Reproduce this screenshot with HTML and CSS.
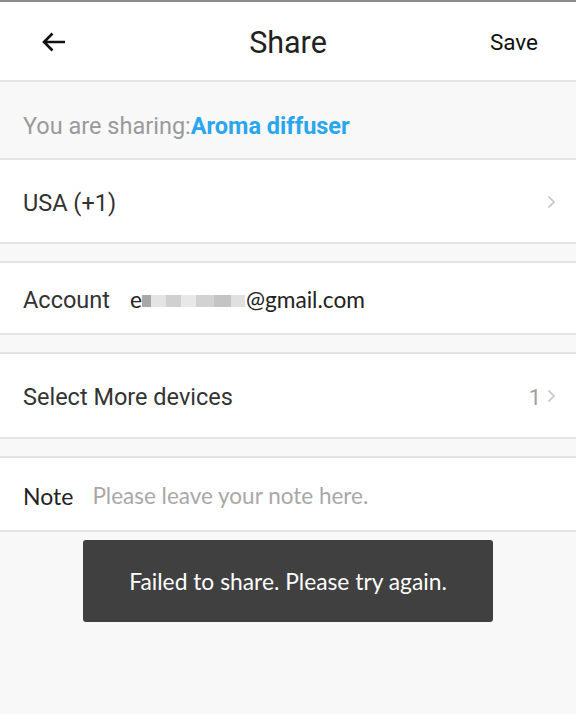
FILE: index.html
```html
<!DOCTYPE html>
<html>
<head>
<meta charset="utf-8">
<link rel="stylesheet" href="styles.css">
</head>
<body>
<div class="page">
  <header class="topbar">
    <span class="back">
      <svg width="26" height="22" viewBox="0 0 26 22"><path d="M24 11H3M11.5 2.5L3 11l8.5 8.5" fill="none" stroke="#111" stroke-width="2.6" stroke-linecap="butt" stroke-linejoin="miter"/></svg>
    </span>
    <h1 class="title">Share</h1>
    <span class="save">Save</span>
  </header>
  <div class="info">You are sharing:<span class="device">Aroma diffuser</span></div>
  <div class="card row tall">
    <span class="label">USA (+1)</span>
    <span class="chev"><svg width="9" height="14" viewBox="0 0 9 14"><path d="M1.5 1.5L7 7l-5.5 5.5" fill="none" stroke="#c4c4c4" stroke-width="1.6"/></svg></span>
  </div>
  <div class="card row short">
    <span class="label">Account</span>
    <span class="email">e<span class="blur"><i class="b1"></i><i class="b2"></i><i class="b3"></i><i class="b4"></i><i class="b5"></i><i class="b6"></i><i class="b7"></i></span>@gmail.com</span>
  </div>
  <div class="card row devices">
    <span class="label">Select More devices</span>
    <span class="count">1</span>
    <span class="chev"><svg width="9" height="14" viewBox="0 0 9 14"><path d="M1.5 1.5L7 7l-5.5 5.5" fill="none" stroke="#c4c4c4" stroke-width="1.6"/></svg></span>
  </div>
  <div class="card row note">
    <span class="label">Note</span>
    <span class="placeholder">Please leave your note here.</span>
  </div>
  <div class="toast">Failed to share. Please try again.</div>
</div>
</body>
</html>
```

FILE: styles.css
```css
* { box-sizing: border-box; }
html, body { margin: 0; padding: 0; }
body {
  background: #f8f8f8;
  font-family: Roboto, "Liberation Sans", sans-serif;
  color: #333;
}
.page {
  position: relative;
  width: 576px;
  height: 714px;
  border-top: 2px solid #8c8c8c;
}
.topbar {
  height: 80px;
  background: #fff;
  border-bottom: 2px solid #e4e4e4;
  display: flex;
  align-items: center;
  justify-content: space-between;
  padding: 2px 38px 0 41px;
  position: relative;
}
.back { display: flex; width: 26px; height: 22px; }
.title {
  position: absolute;
  left: 0; right: 0;
  text-align: center;
  margin: 0;
  font-weight: 400;
  font-size: 30.5px;
  color: #222;
  pointer-events: none;
}
.save { font-size: 22.5px; color: #111; }
.info {
  height: 76px;
  display: flex;
  align-items: center;
  padding-left: 23px;
  font-size: 23.5px;
  color: #9a9a9a;
  padding-top: 12px;
}
.device { color: #2aa6ef; font-weight: 700; }
.card {
  background: #fff;
  border-top: 2px solid #e4e4e4;
  border-bottom: 2px solid #e4e4e4;
  margin-bottom: 17px;
}
.row {
  display: flex;
  align-items: center;
  padding: 3px 20px 0 23px;
}
.tall { height: 86px; }
.short { height: 74px; }
.devices { height: 87px; }
.label { font-size: 23.5px; color: #333; }
.chev { margin-left: auto; display: flex; margin-top: -2px; }
.count { margin-left: auto; font-size: 22px; color: #a0a0a0; margin-right: 6px; }
.count + .chev { margin-left: 0; }
.email {
  margin-left: 20px;
  font-family: Lato, "Open Sans", sans-serif;
  font-size: 22.7px;
  color: #222;
  display: flex;
  align-items: center;
}
.blur { display: inline-flex; align-items: center; height: 12px; margin: 3px 1px 0 0; }
.blur i { display: inline-block; height: 12px; }
.b1 { width: 9px; background: #a8a8a8; }
.b2 { width: 15px; background: #e4e4e4; }
.b3 { width: 15px; background: #d0d0d0; }
.b4 { width: 15px; background: #e8e8e8; }
.b5 { width: 18px; background: #d2d2d2; }
.b6 { width: 17px; background: #c4c4c4; }
.b7 { width: 14px; background: #e0e0e0; }
.note { height: 76px; margin-bottom: 0; }
.note .label { font-family: Lato, "Open Sans", sans-serif; font-size: 23px; color: #222; }
.placeholder {
  margin-left: 19px;
  font-family: Lato, "Open Sans", sans-serif;
  font-size: 22.5px;
  color: #a8a8a8;
}
.toast {
  position: absolute;
  left: 83px;
  top: 538px;
  width: 410px;
  height: 82px;
  background: #404040;
  border-radius: 3px;
  color: #fff;
  font-family: Lato, "Open Sans", sans-serif;
  font-size: 22.8px;
  display: flex;
  align-items: center;
  justify-content: center;
}
```
